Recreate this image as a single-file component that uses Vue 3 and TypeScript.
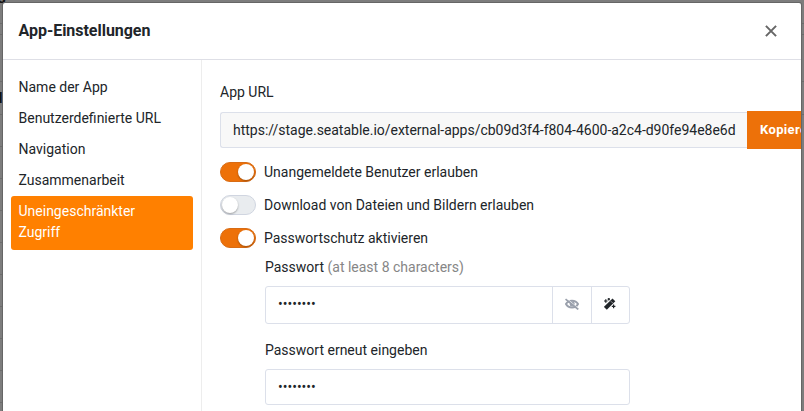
<script setup lang="ts">
import { ref } from 'vue'

interface Toggle {
  label: string
  on: boolean
}

const sections: string[] = [
  'Name der App',
  'Benutzerdefinierte URL',
  'Navigation',
  'Zusammenarbeit',
  'Uneingeschränkter Zugriff',
]
const active = ref(4)
const toggles = ref<Toggle[]>([
  { label: 'Unangemeldete Benutzer erlauben', on: true },
  { label: 'Download von Dateien und Bildern erlauben', on: false },
  { label: 'Passwortschutz aktivieren', on: true },
])
const url = 'https://stage.seatable.io/external-apps/cb09d3f4-f804-4600-a2c4-d90fe94e8e6d'
const password = ref('12345678')
const repeated = ref('12345678')
</script>

<template>
  <div class="page">
    <div class="backdrop">
      <div class="bar top"><b>s</b></div>
      <div class="bar tools"></div>
      <div class="bar views"></div>
      <div class="bar head"><b>N</b></div>
      <div v-for="n in 10" :key="n" class="bar record"><i></i></div>
    </div>
    <section class="modal">
      <header class="modal-header">
        <h5>App-Einstellungen</h5>
        <button class="close" aria-label="Close">
          <svg viewBox="0 0 12 12" width="12" height="12"><path d="M.9.9 11.100 11.100M11.100.9.9 11.100" stroke="#666" stroke-width="2" fill="none" /></svg>
        </button>
      </header>
      <div class="modal-body">
        <nav class="side">
          <a v-for="(s, i) in sections" :key="s" :class="{ active: i === active }" @click="active = i">{{ s }}</a>
        </nav>
        <main class="content">
          <div class="label">App URL</div>
          <div class="url-row">
            <div class="url">{{ url }}</div>
            <button class="copy">Kopieren</button>
          </div>
          <div class="toggles">
            <label v-for="t in toggles" :key="t.label" class="toggle" @click="t.on = !t.on">
              <span class="switch" :class="{ on: t.on }"><span class="knob"></span></span>
              <span>{{ t.label }}</span>
            </label>
          </div>
          <div class="passwords">
            <div class="label">Passwort <span class="hint">(at least 8 characters)</span></div>
            <div class="group">
              <input v-model="password" type="password" />
              <button class="addon">
                <svg viewBox="0 0 14 12" width="14" height="12" fill="none">
                  <path d="M1 6C3.400 1.500 10.600 1.500 13 6 10.600 10.500 3.400 10.500 1 6Z" stroke="#9aa0ac" stroke-width="2" />
                  <circle cx="7.200" cy="6" r="2.500" fill="#9aa0ac" />
                  <path d="M1.300.2 13.800 10.600" stroke="#fff" stroke-width=".8" />
                  <path d="M.5 1.100 13.300 11.400" stroke="#9aa0ac" stroke-width="1.800" />
                </svg>
              </button>
              <button class="addon wand">
                <svg viewBox="0 0 12 12" width="12" height="12" fill="none" stroke="#212529">
                  <path d="M1.400 10.300 9.900 1.800" stroke-width="4" />
                  <path d="M7 3.300 8.600 4.900" stroke="#fff" stroke-width=".6" />
                  <path d="M1.800 1.200v3.600M0 3h3.600M4.800 0v2.400M3.600 1.200H6M9.600 6.600v3.600M7.800 8.400h3.600" stroke-width="1.200" />
                </svg>
              </button>
            </div>
            <div class="label repeat">Passwort erneut eingeben</div>
            <div class="group second"><input v-model="repeated" type="password" /></div>
          </div>
        </main>
      </div>
    </section>
  </div>
</template>

<style>
body {
  overflow: hidden;
}
</style>

<style scoped>
* {
  box-sizing: border-box;
}
.page {
  position: relative;
  width: 804px;
  height: 411px;
  padding: 3px 3px 0;
  overflow: hidden;
  background: #7d7d7d;
  color: #212529;
  font: 14px/21px Roboto, sans-serif;
}
.backdrop {
  position: absolute;
  inset: 0;
}
.bar {
  position: relative;
  height: 32px;
  border-bottom: 1px solid #6c6c6c;
}
.bar.top {
  height: 24px;
}
.bar.tools {
  height: 11px;
}
.bar.views {
  height: 47px;
}
.bar.head {
  height: 33px;
}
.bar.record {
  width: 3px;
}
.bar b {
  position: absolute;
  left: -2px;
  top: -12px;
  color: #111;
  font-size: 15px;
}
.bar.head b {
  left: -8px;
  top: 6px;
}
.bar i {
  position: absolute;
  left: 2px;
  top: 11px;
  width: 1px;
  height: 2px;
  background: #222;
}
.modal {
  position: relative;
  width: 798px;
  height: 440px;
  overflow: hidden;
  border-radius: 2px;
  background: #fff;
  box-shadow: 0 0 0 1px #666;
}
.modal-header {
  display: flex;
  align-items: center;
  justify-content: space-between;
  height: 57px;
  padding: 0 24.5px 2px 15.5px;
  border-bottom: 1px solid #dedfe6;
}
h5 {
  margin: 0;
  font-size: 16px;
  font-weight: 700;
  letter-spacing: -0.03px;
}
button {
  padding: 0;
  border: 0;
  background: none;
  font: inherit;
}
.close {
  display: flex;
  padding-top: 1px;
}
.modal-body {
  display: flex;
  height: 383px;
}
.side {
  flex: none;
  width: 199px;
  padding: 12px 8px;
  border-right: 1px solid #ededed;
}
.side a {
  display: block;
  padding: 5px 24px 5px 7.5px;
  border-radius: 3px;
}
.side a.active {
  padding-bottom: 7px;
  background: #ff8000;
  color: #fff;
}
.content {
  flex: none;
  width: 640px;
  padding: 22px 0 0 18px;
}
.url-row {
  display: flex;
  align-items: center;
  height: 38px;
  margin-top: 8px;
}
.url {
  width: 527px;
  height: 36px;
  padding: 7px 12px 5px;
  overflow: hidden;
  border: 1px solid #dce0ea;
  border-right: 0;
  border-radius: 3px 0 0 3px;
  background: #f8f8f8;
  letter-spacing: -0.01px;
  white-space: nowrap;
}
.copy {
  width: 84px;
  height: 38px;
  padding: 0 0 2px 13px;
  background: #ed7109;
  color: #fff;
  font-size: 13px;
  font-weight: 700;
  letter-spacing: 0.35px;
  text-align: left;
}
.toggles {
  display: grid;
  gap: 12px;
  margin-top: 13px;
}
.toggle {
  display: flex;
  align-items: flex-start;
  gap: 8px;
  height: 21px;
}
.switch {
  display: flex;
  width: 36px;
  height: 20px;
  padding: 1px;
  border: 1px solid #d0d5e0;
  border-radius: 10px;
  background: #e9ecef;
}
.switch.on {
  justify-content: flex-end;
  border-color: #d86c15;
  background: #ed7109;
}
.knob {
  width: 16px;
  height: 16px;
  border-radius: 50%;
  background: #fff;
  box-shadow: 0 1px 2px #0005;
}
.passwords {
  width: 365px;
  margin: 8px 0 0 45px;
}
.hint {
  color: #868686;
}
.group {
  display: flex;
  height: 38px;
  margin-top: 8px;
  border: 1px solid #dce0ea;
  border-radius: 3px;
}
.group.second {
  height: 36px;
}
input {
  flex: 1;
  min-width: 0;
  padding: 0 12px 2px;
  border: 0;
  outline: 0;
  background: transparent;
  color: #212529;
  font: inherit;
}
.second input {
  padding-bottom: 0;
}
.addon {
  display: flex;
  align-items: center;
  justify-content: center;
  width: 39px;
  padding-bottom: 2px;
  border-left: 1px solid #dce0ea;
}
.addon.wand {
  width: 38px;
  padding-right: 1px;
}
.repeat {
  margin-top: 16px;
}
</style>
